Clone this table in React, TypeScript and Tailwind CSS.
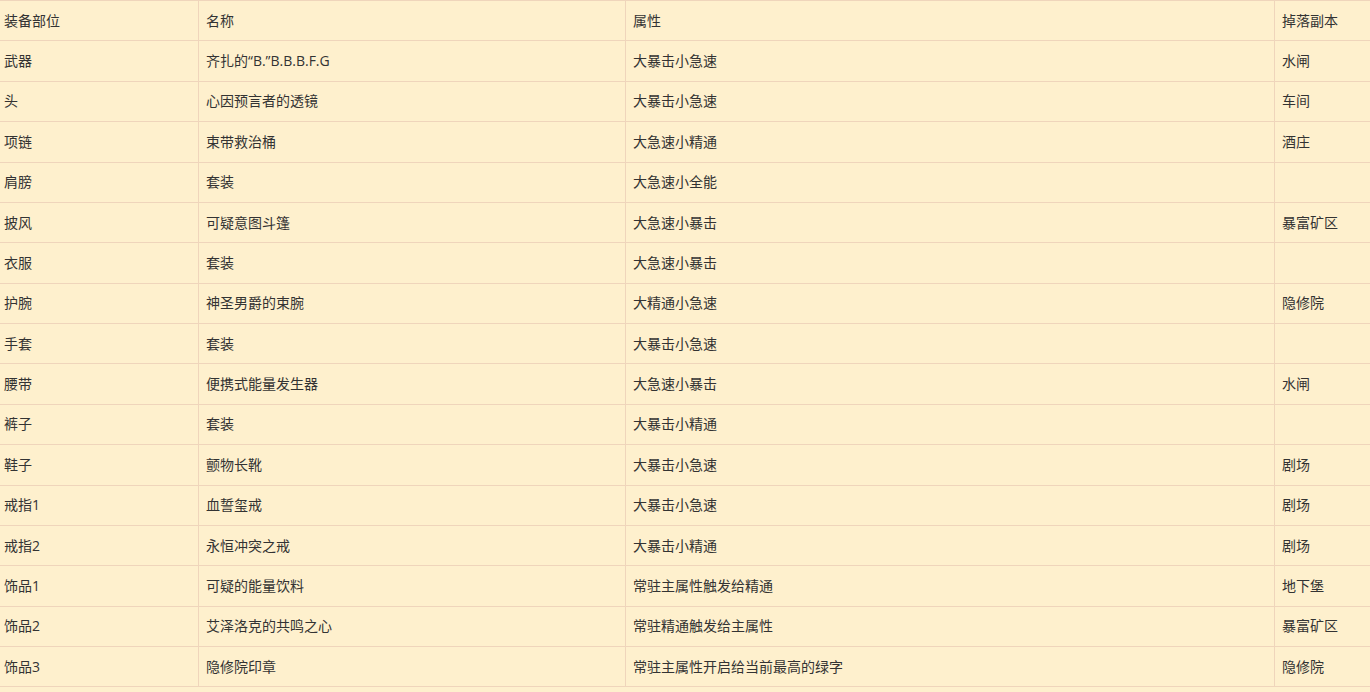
import React from "react";

const rows: [string, string, string, string][] = [
  ["武器", "齐扎的“B.”B.B.B.F.G", "大暴击小急速", "水闸"],
  ["头", "心因预言者的透镜", "大暴击小急速", "车间"],
  ["项链", "束带救治桶", "大急速小精通", "酒庄"],
  ["肩膀", "套装", "大急速小全能", ""],
  ["披风", "可疑意图斗篷", "大急速小暴击", "暴富矿区"],
  ["衣服", "套装", "大急速小暴击", ""],
  ["护腕", "神圣男爵的束腕", "大精通小急速", "隐修院"],
  ["手套", "套装", "大暴击小急速", ""],
  ["腰带", "便携式能量发生器", "大急速小暴击", "水闸"],
  ["裤子", "套装", "大暴击小精通", ""],
  ["鞋子", "颤物长靴", "大暴击小急速", "剧场"],
  ["戒指1", "血誓玺戒", "大暴击小急速", "剧场"],
  ["戒指2", "永恒冲突之戒", "大暴击小精通", "剧场"],
  ["饰品1", "可疑的能量饮料", "常驻主属性触发给精通", "地下堡"],
  ["饰品2", "艾泽洛克的共鸣之心", "常驻精通触发给主属性", "暴富矿区"],
  ["饰品3", "隐修院印章", "常驻主属性开启给当前最高的绿字", "隐修院"],
];

const header = ["装备部位", "名称", "属性", "掉落副本"];

export default function App() {
  const cell = "border border-[#efd5bb] h-[40.375px] pl-[7px] pr-2 first:pl-2 align-middle font-normal text-left whitespace-nowrap";
  return (
    <div
      className="w-[1370px] h-[692px] bg-[#fef0cd] text-[#333333] text-[14px] overflow-hidden"
      style={{ fontFamily: '"Open Sans", "Noto Sans CJK SC", sans-serif' }}
    >
      <table className="border-collapse table-fixed w-[1380px] -ml-[5px] leading-[20px]">
        <colgroup>
          <col className="w-[203px]" />
          <col className="w-[427px]" />
          <col className="w-[649px]" />
          <col className="w-[101px]" />
        </colgroup>
        <thead>
          <tr>
            {header.map((h) => (
              <th key={h} className={cell}>
                {h}
              </th>
            ))}
          </tr>
        </thead>
        <tbody>
          {rows.map((r, i) => (
            <tr key={i}>
              {r.map((c, j) => (
                <td key={j} className={cell}>
                  {c}
                </td>
              ))}
            </tr>
          ))}
        </tbody>
      </table>
    </div>
  );
}
